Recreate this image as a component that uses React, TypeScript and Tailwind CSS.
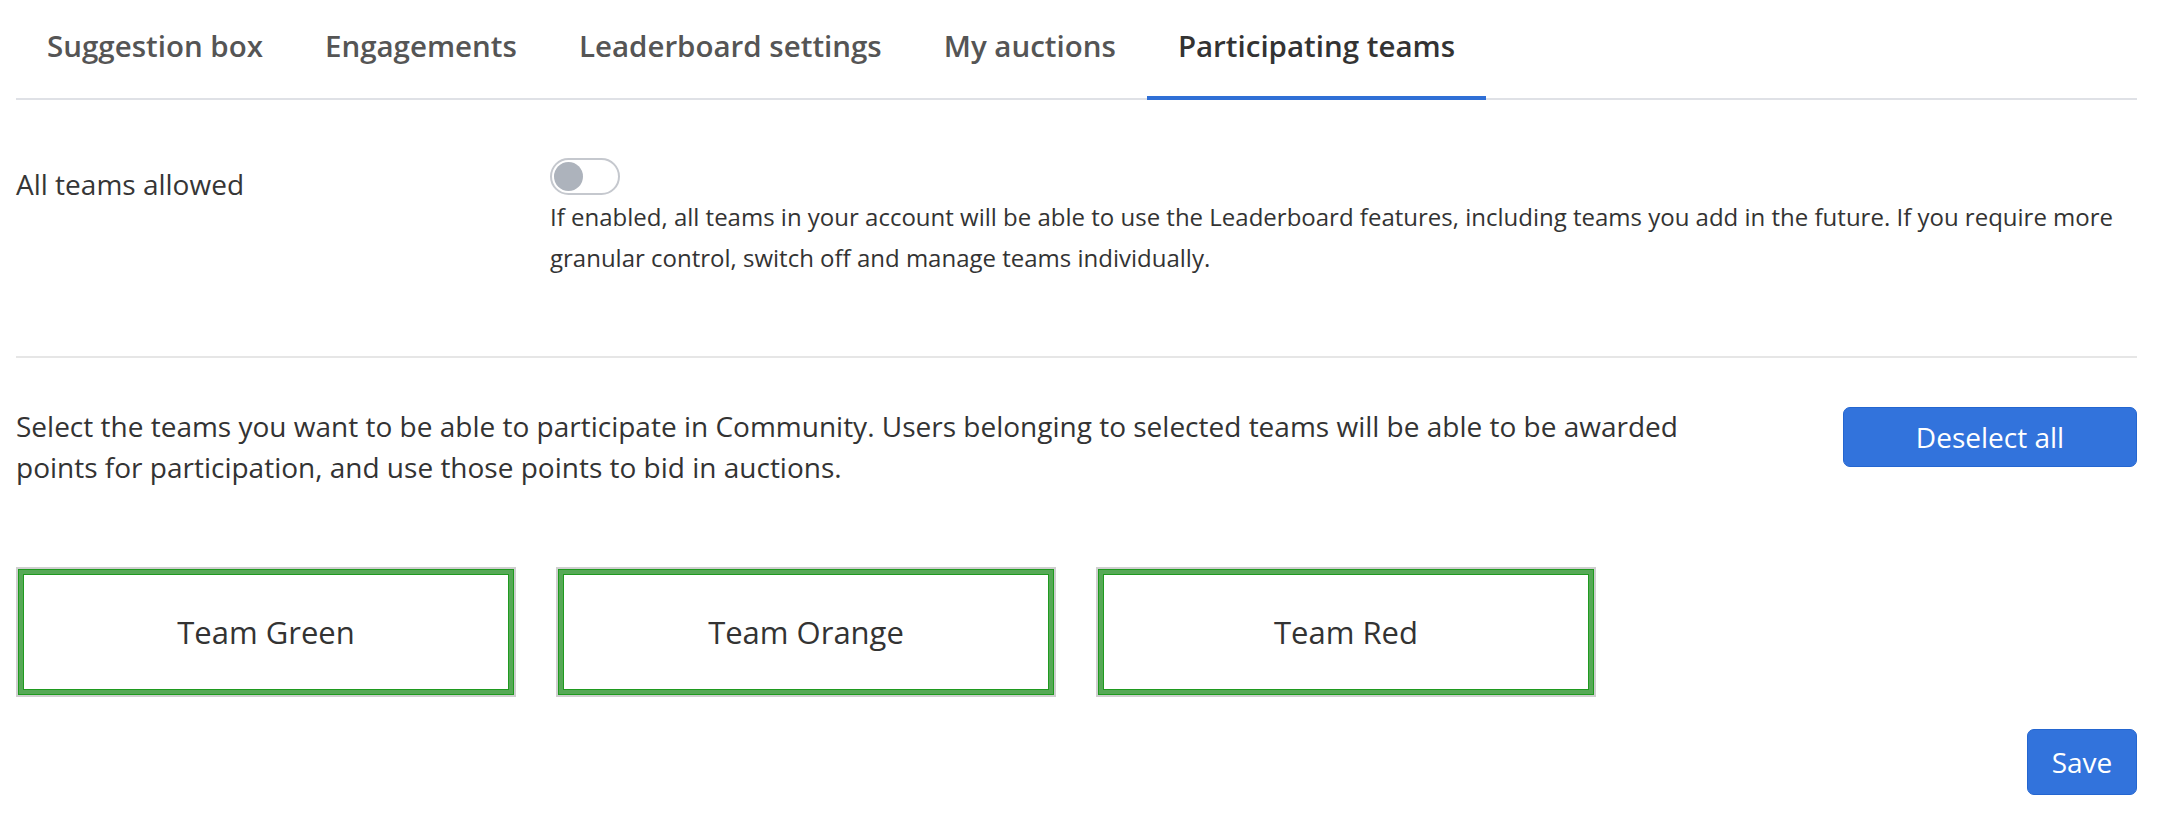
import { useState } from "react";

const tabs = ["Suggestion box", "Engagements", "Leaderboard settings", "My auctions", "Participating teams"];
const teams = ["Team Green", "Team Orange", "Team Red"];

export default function App() {
  const [active, setActive] = useState("Participating teams");
  const [allowed, setAllowed] = useState(false);

  return (
    <div className="min-h-screen bg-white pl-4 pr-[37px] font-['Open_Sans',sans-serif] text-[#363636]">
      {/* Tabs */}
      <div className="flex border-b-2 border-[#dfe1e6]">
        {tabs.map((tab) => (
          <button
            className={`-mb-[2px] h-[100px] border-b-4 px-[31px] pb-[3px] text-[29.5px] font-semibold ${
              active === tab ? "border-[#2f6fd6] text-[#333333]" : "border-transparent text-[#555555]"
            }`}
            key={tab}
            onClick={() => setActive(tab)}
            type="button"
          >
            {tab}
          </button>
        ))}
      </div>

      {/* All teams toggle */}
      <div className="flex border-b-2 border-[#e6e6e6] pt-[58px] pb-[78px]">
        <div className="w-[534px] shrink-0 pt-[6px] text-[28px] leading-[40px]">All teams allowed</div>
        <div className="flex-1">
          <button
            aria-label="All teams allowed"
            className="flex h-[37px] w-[70px] items-center rounded-full border-2 border-[#c5c8ce] bg-white px-[2px]"
            onClick={() => setAllowed(!allowed)}
            type="button"
          >
            <span
              className={`h-[29px] w-[29px] rounded-full ${allowed ? "ml-auto bg-[#3273dc]" : "bg-[#adb3bc]"}`}
            />
          </button>
          <p className="mt-[1px] text-[24px] leading-[41px] text-[#333333]">
            If enabled, all teams in your account will be able to use the Leaderboard features, including teams you
            add in the future. If you require more granular control, switch off and manage teams individually.
          </p>
        </div>
      </div>

      {/* Team selection */}
      <div className="flex items-start justify-between pt-[48px]">
        <p className="w-[1700px] text-[28px] leading-[41px] text-[#333333]">
          Select the teams you want to be able to participate in Community. Users belonging to selected teams will be
          able to be awarded points for participation, and use those points to bid in auctions.
        </p>
        <button
          className="mt-[1px] h-[60px] w-[294px] shrink-0 rounded-[7px] border border-[#2466d0] bg-[#3273dc] text-[28px] text-white"
          type="button"
        >
          Deselect all
        </button>
      </div>

      <div className="mt-[79px] flex gap-[40px]">
        {teams.map((team) => (
          <div
            className="flex h-[130px] w-[500px] items-center justify-center border-2 border-[#cfcfcf] text-[31px] text-[#333333] shadow-[inset_0_0_0_1px_#1f9a1f,inset_0_0_0_5px_#56a956,inset_0_0_0_6px_#1f9a1f]"
            key={team}
          >
            {team}
          </div>
        ))}
      </div>

      <div className="mt-[32px] flex justify-end">
        <button
          className="h-[66px] w-[110px] rounded-[7px] border border-[#2466d0] bg-[#3273dc] text-[28px] text-white"
          type="button"
        >
          Save
        </button>
      </div>
    </div>
  );
}
